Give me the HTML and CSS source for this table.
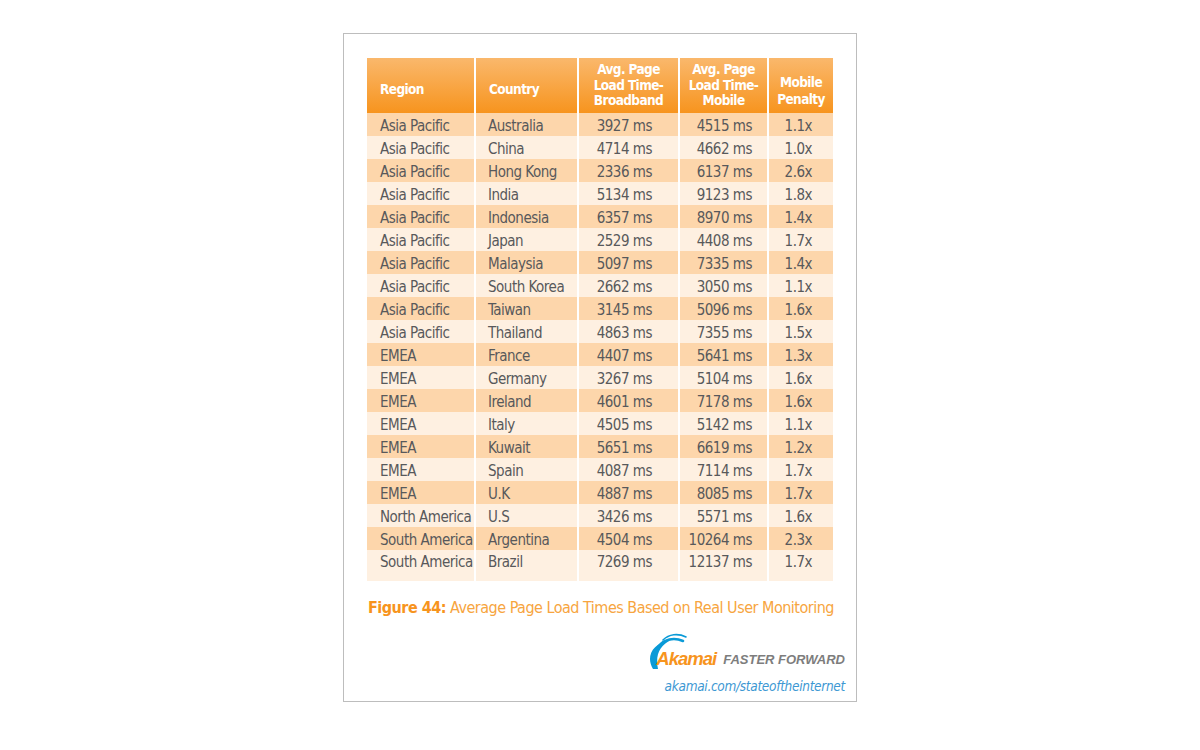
FILE: index.html
```html
<!DOCTYPE html>
<html>
<head>
<meta charset="utf-8">
<link rel="stylesheet" href="styles.css">
</head>
<body>
<div class="frame">
  <table class="data">
    <colgroup>
      <col class="c1"><col class="c2"><col class="c3"><col class="c4"><col class="c5">
    </colgroup>
    <thead>
      <tr>
        <th class="left one">Region</th>
        <th class="left one">Country</th>
        <th class="three">Avg. Page<br>Load Time-<br>Broadband</th>
        <th class="three">Avg. Page<br>Load Time-<br>Mobile</th>
        <th class="two">Mobile<br>Penalty</th>
      </tr>
    </thead>
    <tbody>
      <tr><td>Asia Pacific</td><td>Australia</td><td class="bb">3927 ms</td><td class="mb">4515 ms</td><td class="pn">1.1x</td></tr>
      <tr><td>Asia Pacific</td><td>China</td><td class="bb">4714 ms</td><td class="mb">4662 ms</td><td class="pn">1.0x</td></tr>
      <tr><td>Asia Pacific</td><td>Hong Kong</td><td class="bb">2336 ms</td><td class="mb">6137 ms</td><td class="pn">2.6x</td></tr>
      <tr><td>Asia Pacific</td><td>India</td><td class="bb">5134 ms</td><td class="mb">9123 ms</td><td class="pn">1.8x</td></tr>
      <tr><td>Asia Pacific</td><td>Indonesia</td><td class="bb">6357 ms</td><td class="mb">8970 ms</td><td class="pn">1.4x</td></tr>
      <tr><td>Asia Pacific</td><td>Japan</td><td class="bb">2529 ms</td><td class="mb">4408 ms</td><td class="pn">1.7x</td></tr>
      <tr><td>Asia Pacific</td><td>Malaysia</td><td class="bb">5097 ms</td><td class="mb">7335 ms</td><td class="pn">1.4x</td></tr>
      <tr><td>Asia Pacific</td><td>South Korea</td><td class="bb">2662 ms</td><td class="mb">3050 ms</td><td class="pn">1.1x</td></tr>
      <tr><td>Asia Pacific</td><td>Taiwan</td><td class="bb">3145 ms</td><td class="mb">5096 ms</td><td class="pn">1.6x</td></tr>
      <tr><td>Asia Pacific</td><td>Thailand</td><td class="bb">4863 ms</td><td class="mb">7355 ms</td><td class="pn">1.5x</td></tr>
      <tr><td>EMEA</td><td>France</td><td class="bb">4407 ms</td><td class="mb">5641 ms</td><td class="pn">1.3x</td></tr>
      <tr><td>EMEA</td><td>Germany</td><td class="bb">3267 ms</td><td class="mb">5104 ms</td><td class="pn">1.6x</td></tr>
      <tr><td>EMEA</td><td>Ireland</td><td class="bb">4601 ms</td><td class="mb">7178 ms</td><td class="pn">1.6x</td></tr>
      <tr><td>EMEA</td><td>Italy</td><td class="bb">4505 ms</td><td class="mb">5142 ms</td><td class="pn">1.1x</td></tr>
      <tr><td>EMEA</td><td>Kuwait</td><td class="bb">5651 ms</td><td class="mb">6619 ms</td><td class="pn">1.2x</td></tr>
      <tr><td>EMEA</td><td>Spain</td><td class="bb">4087 ms</td><td class="mb">7114 ms</td><td class="pn">1.7x</td></tr>
      <tr><td>EMEA</td><td>U.K</td><td class="bb">4887 ms</td><td class="mb">8085 ms</td><td class="pn">1.7x</td></tr>
      <tr><td>North America</td><td>U.S</td><td class="bb">3426 ms</td><td class="mb">5571 ms</td><td class="pn">1.6x</td></tr>
      <tr><td>South America</td><td>Argentina</td><td class="bb">4504 ms</td><td class="mb">10264 ms</td><td class="pn">2.3x</td></tr>
      <tr class="last"><td>South America</td><td>Brazil</td><td class="bb">7269 ms</td><td class="mb">12137 ms</td><td class="pn">1.7x</td></tr>
    </tbody>
  </table>
  <p class="caption"><b>Figure 44:</b> Average Page Load Times Based on Real User Monitoring</p>
  <div class="brand">
    <div class="logo">
      <svg class="swoosh" width="40" height="38" viewBox="0 0 40 38">
        <path d="M6 37 C-1 26 4 11 24 8 C13 13 8 23 11 37 Z" fill="#0a9ad7"/>
        <path d="M11 15 C17 7 27 5 36 9" fill="none" stroke="#0a9ad7" stroke-width="2.6" stroke-linecap="round"/>
        <path d="M16 8 C22 2 31 1 39 5" fill="none" stroke="#0a9ad7" stroke-width="1.6" stroke-linecap="round"/>
      </svg>
      <span class="akamai">Akamai</span>
      <span class="tag">FASTER FORWARD</span>
    </div>
    <div class="url">akamai.com/stateoftheinternet</div>
  </div>
</div>
</body>
</html>
```
FILE: styles.css
```css
html, body {
  margin: 0;
  padding: 0;
  background: #ffffff;
}
body {
  font-family: "DejaVu Sans Condensed", "Liberation Sans", sans-serif;
  color: #58595b;
}
.frame {
  box-sizing: border-box;
  margin: 33px 0 0 343px;
  width: 514px;
  height: 669px;
  border: 1px solid #bdbdbd;
  padding: 24px 23px 0 23px;
}
.data {
  border-collapse: separate;
  border-spacing: 0;
  table-layout: fixed;
  width: 466px;
}
.c1 { width: 107px; }
.c2 { width: 103px; }
.c3 { width: 101px; }
.c4 { width: 89px; }
.c5 { width: 66px; }
.data th {
  height: 55px;
  box-sizing: border-box;
  background: linear-gradient(#fab86c, #f7941e);
  color: #ffffff;
  font-weight: bold;
  font-size: 13.5px;
  letter-spacing: -0.6px;
  line-height: 15.5px;
  text-align: center;
  vertical-align: middle;
  padding: 0;
}
.data th + th, .data td + td {
  border-left: 2px solid #ffffff;
}
.data th.left {
  text-align: left;
  padding-left: 13px;
}
.data th.one { padding-top: 8px; }
.data th.two { padding-top: 10px; line-height: 17px; }
.data td {
  height: 23px;
  box-sizing: border-box;
  padding: 2px 0 0 13px;
  font-size: 15px;
  letter-spacing: -0.5px;
  line-height: 20px;
  white-space: nowrap;
  vertical-align: middle;
}
.data td + td { padding-left: 12px; }
.data tbody tr:nth-child(odd) td { background: #fdd6ab; }
.data tbody tr:nth-child(even) td { background: #fef0e1; }
.data td.bb { text-align: right; padding: 2px 26px 0 0; }
.data td.mb { text-align: right; padding: 2px 15px 0 0; }
.data td.pn { text-align: right; padding: 2px 21px 0 0; }
.data tr.last td {
  height: 31px;
  vertical-align: top;
  padding-top: 2px;
}
.caption {
  margin: 16px 0 0 1px;
  font-size: 16px;
  letter-spacing: -0.5px;
  line-height: 22px;
  color: #f7a540;
  white-space: nowrap;
}
.caption b {
  color: #f7941d;
}
.brand {
  display: flex;
  flex-direction: column;
  align-items: flex-end;
  margin-top: 13px;
  margin-right: -12px;
}
.logo {
  display: flex;
  align-items: flex-end;
  height: 38px;
}
.swoosh {
  display: block;
  margin-right: -31px;
}
.akamai {
  font-family: "Liberation Sans", sans-serif;
  font-weight: bold;
  font-style: italic;
  font-size: 18.5px;
  line-height: 20px;
  color: #f7941d;
  letter-spacing: -1px;
  margin-bottom: 1px;
}
.tag {
  font-family: "Liberation Sans", sans-serif;
  font-weight: bold;
  font-style: italic;
  font-size: 13px;
  line-height: 16px;
  color: #7d7d7d;
  margin-left: 7px;
  margin-bottom: 2px;
}
.url {
  margin-top: 7px;
  font-style: italic;
  font-size: 13.5px;
  letter-spacing: -0.3px;
  line-height: 18px;
  color: #3d98d3;
}
```
